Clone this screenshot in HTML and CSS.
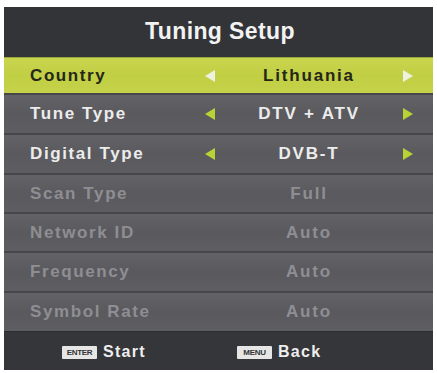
FILE: index.html
```html
<!DOCTYPE html>
<html>
<head>
<meta charset="utf-8">
<link rel="stylesheet" href="styles.css">
</head>
<body>
<div class="panel">
  <div class="title">Tuning Setup</div>
  <div class="row active">
    <span class="label">Country</span>
    <svg class="arrow" viewBox="0 0 10 12"><polygon points="10,0 10,12 0,6"/></svg>
    <span class="value">Lithuania</span>
    <svg class="arrow" viewBox="0 0 10 12"><polygon points="0,0 0,12 10,6"/></svg>
  </div>
  <div class="row">
    <span class="label">Tune Type</span>
    <svg class="arrow" viewBox="0 0 10 12"><polygon points="10,0 10,12 0,6"/></svg>
    <span class="value">DTV + ATV</span>
    <svg class="arrow" viewBox="0 0 10 12"><polygon points="0,0 0,12 10,6"/></svg>
  </div>
  <div class="row">
    <span class="label">Digital Type</span>
    <svg class="arrow" viewBox="0 0 10 12"><polygon points="10,0 10,12 0,6"/></svg>
    <span class="value">DVB-T</span>
    <svg class="arrow" viewBox="0 0 10 12"><polygon points="0,0 0,12 10,6"/></svg>
  </div>
  <div class="row disabled short">
    <span class="label">Scan Type</span>
    <span class="spacer"></span>
    <span class="value">Full</span>
  </div>
  <div class="row disabled short">
    <span class="label">Network ID</span>
    <span class="spacer"></span>
    <span class="value">Auto</span>
  </div>
  <div class="row disabled">
    <span class="label">Frequency</span>
    <span class="spacer"></span>
    <span class="value">Auto</span>
  </div>
  <div class="row disabled">
    <span class="label">Symbol Rate</span>
    <span class="spacer"></span>
    <span class="value">Auto</span>
  </div>
  <div class="footer">
    <div class="hint hint-start"><span class="key">ENTER</span><span class="hint-text">Start</span></div>
    <div class="hint hint-back"><span class="key">MENU</span><span class="hint-text">Back</span></div>
  </div>
</div>
</body>
</html>
```

FILE: styles.css
```css
html, body {
  margin: 0;
  padding: 0;
  background: #ffffff;
}
body {
  font-family: "Liberation Sans", Arial, sans-serif;
  font-weight: bold;
}
.panel {
  margin: 7px 4px 0 4px;
  width: 429px;
  height: 363px;
  background: #5a5a5e;
  display: flex;
  flex-direction: column;
}
.title {
  height: 50px;
  background: #333438;
  color: #f2f2f2;
  font-size: 23px;
  letter-spacing: 0.4px;
  display: flex;
  align-items: center;
  justify-content: center;
  padding-left: 3px;
  padding-bottom: 1px;
  box-sizing: border-box;
}
.row {
  height: 40px;
  box-sizing: border-box;
  display: grid;
  grid-template-columns: 175px 12px 184px 12px;
  column-gap: 0;
  align-items: center;
  padding-left: 26px;
  border-top: 2px solid #47474b;
  background: linear-gradient(#636367, #5a5a5e 50%, #5e5e62);
  color: #ececec;
  font-size: 17px;
  letter-spacing: 1.6px;
}
.row.short { height: 39px; }
.row.active {
  height: 36px;
  border-top: 1px solid #9aa63a;
  background: linear-gradient(#c9d54e, #c1cf44 50%, #c5d24a);
  color: #25261a;
}
.label { white-space: nowrap; }
.value {
  text-align: center;
  white-space: nowrap;
  letter-spacing: 1.8px;
}
.arrow {
  width: 10px;
  height: 12px;
  fill: #b9d235;
}
.arrow:last-child { margin-left: 2px; }
.active .arrow { fill: #eef0e0; }
.disabled { color: #8e8e93; }
.footer {
  flex: 1;
  background: #35363a;
  border-top: 1px solid #2c2d30;
  display: flex;
  align-items: center;
  padding-top: 2px;
  box-sizing: border-box;
}
.hint {
  display: flex;
  align-items: center;
  color: #eeeeee;
  font-size: 16px;
  letter-spacing: 1.3px;
}
.hint-start { margin-left: 58px; }
.hint-back { margin-left: 91px; }
.key {
  display: inline-block;
  background: #e6e6e6;
  color: #333333;
  font-size: 8px;
  letter-spacing: -0.3px;
  line-height: 13px;
  height: 13px;
  width: 35px;
  text-align: center;
  border-radius: 1px;
  margin-right: 6px;
}
```
